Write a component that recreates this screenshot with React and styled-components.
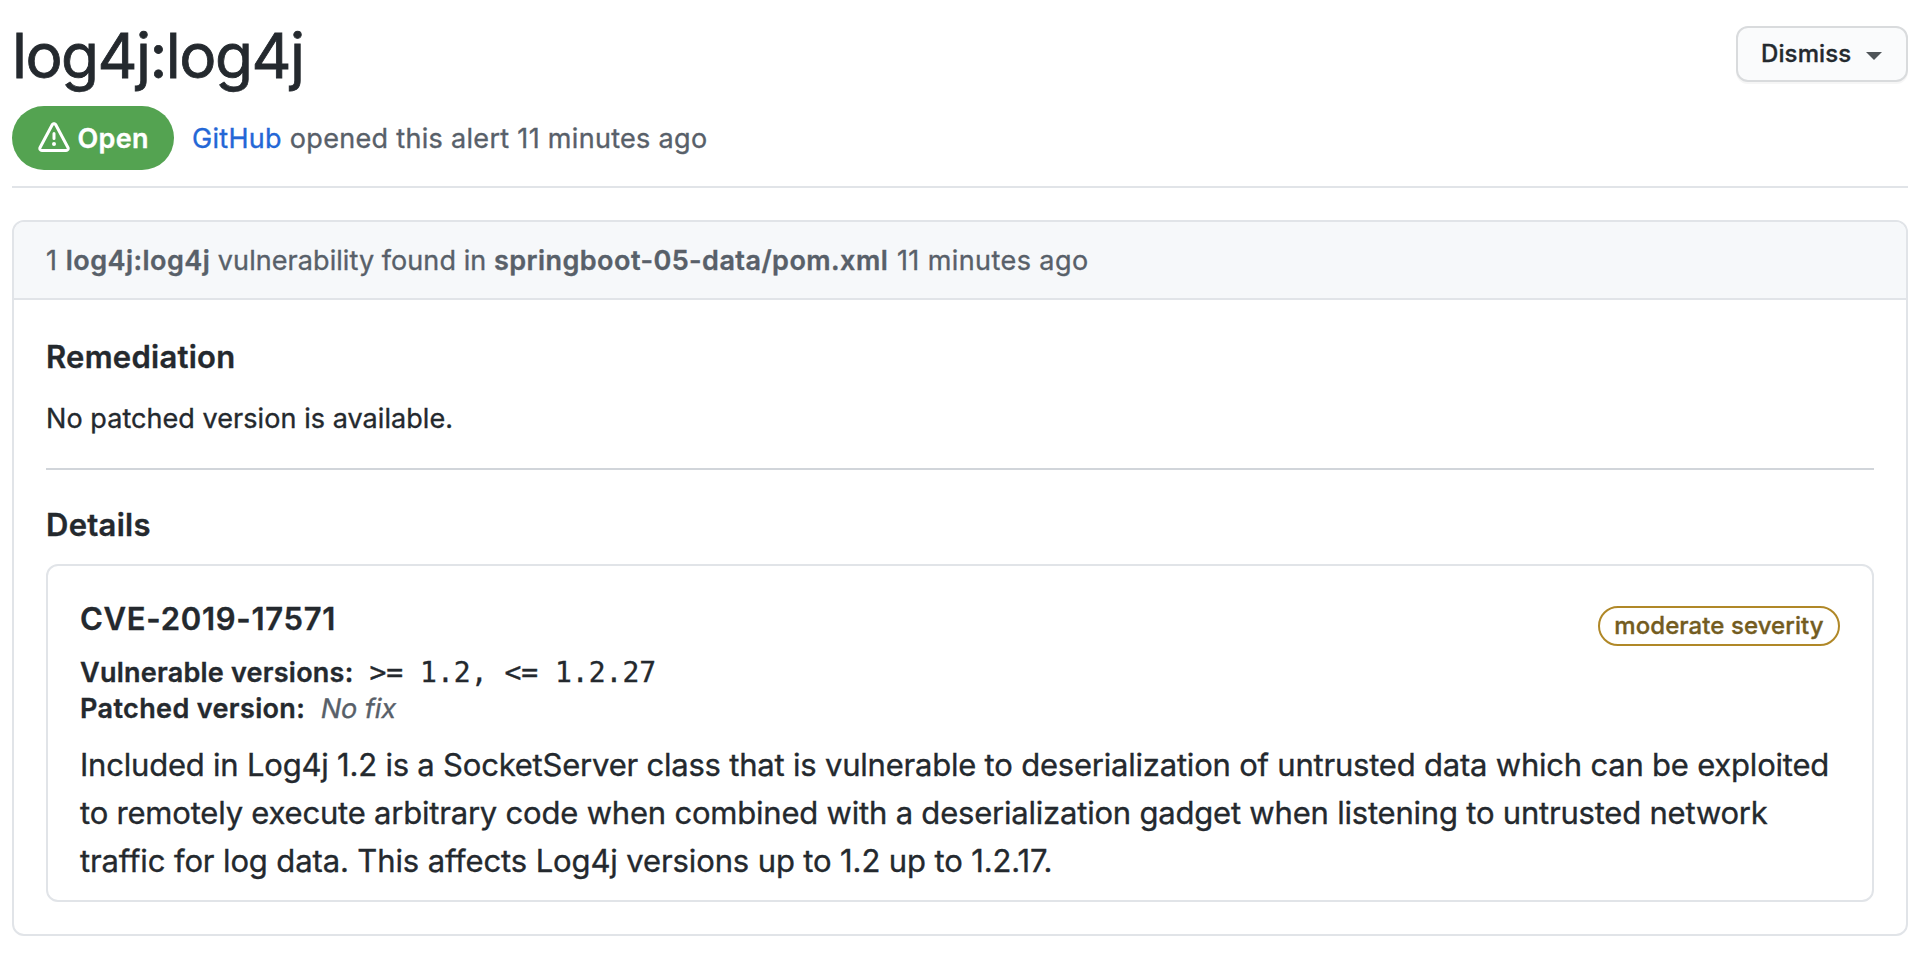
import React from "react";
import styled, { createGlobalStyle } from "styled-components";

const GlobalStyle = createGlobalStyle`
  *, *::before, *::after { box-sizing: border-box; }
  body {
    margin: 0;
    background: #fff;
    color: #24292e;
    font-family: Inter, "Liberation Sans", sans-serif;
    font-size: 27px;
    -webkit-text-stroke: 0.35px currentColor;
  }
`;

const Page = styled.main`
  padding: 20px 22px 0 12px;
`;

const PageHeader = styled.header`
  display: flex;
  flex-direction: column;
  border-bottom: 2px solid #e1e4e8;
  padding-bottom: 16px;
`;

const TitleRow = styled.div`
  display: flex;
  align-items: flex-start;
  justify-content: space-between;
  height: 72px;
  margin-bottom: 14px;
`;

const Title = styled.h1`
  margin: 0;
  font-size: 62px;
  font-weight: 400;
  line-height: 71px;
  letter-spacing: -1.55px;
  -webkit-text-stroke-width: 0.8px;
`;

const DismissButton = styled.button`
  display: flex;
  align-items: center;
  justify-content: space-between;
  width: 172px;
  height: 56px;
  margin-top: 6px;
  padding: 0 24px 0 23px;
  border: 2px solid #d9dbdd;
  border-radius: 12px;
  background: #fafbfc;
  box-shadow: 0 2px 0 rgba(27, 31, 35, 0.04);
  color: #24292e;
  font: 500 24px/40px Inter, "Liberation Sans", sans-serif;
  letter-spacing: 0.12px;
`;

const Caret = styled.span`
  border: 8px solid transparent;
  border-top-color: #4f5458;
  border-bottom: 0;
  margin-top: 3px;
`;

const StatusRow = styled.div`
  display: flex;
  align-items: center;
  height: 64px;
`;

const StatePill = styled.span`
  display: flex;
  align-items: center;
  gap: 7.5px;
  width: 162px;
  height: 64px;
  margin-right: 18px;
  padding-left: 26px;
  border-radius: 32px;
  background: #54a351;
  color: #fff;
  font-weight: 600;
  letter-spacing: 0.31px;
`;

const StatusText = styled.span`
  color: #586069;
  letter-spacing: 0.31px;
`;

const Link = styled.a`
  color: #2467d6;
`;

const Box = styled.section`
  margin-top: 32px;
  border: 2px solid #e1e4e8;
  border-radius: 12px;
`;

const BoxHeader = styled.div`
  height: 78px;
  padding: 1px 32px 0;
  border-bottom: 2px solid #e1e4e8;
  border-radius: 10px 10px 0 0;
  background: #f6f8fa;
  color: #586069;
  line-height: 76px;
  letter-spacing: 0.07px;

  strong {
    font-weight: 600;
    letter-spacing: 0.45px;
  }
`;

const Count = styled.span`
  margin-right: 1px;
`;

const Age = styled.span`
  margin-left: 1px;
  letter-spacing: 0.42px;
`;

const BoxBody = styled.div`
  padding: 33px 32px 32px;
`;

const SectionTitle = styled.h3`
  margin: 0;
  font-size: 31px;
  font-weight: 600;
  line-height: 48px;
  letter-spacing: ${(p) => p.$tracking || "0.26px"};
`;

const RemediationText = styled.p`
  margin: 17px 0 28px;
  line-height: 42px;
  letter-spacing: 0.06px;
`;

const Rule = styled.hr`
  height: 2px;
  margin: 0 0 31px;
  border: 0;
  background: #d1d5da;
`;

const Advisory = styled.article`
  margin-top: 15px;
  padding: 29px 32px 15px;
  border: 2px solid #e1e4e8;
  border-radius: 12px;
`;

const AdvisoryHead = styled.div`
  display: flex;
  align-items: flex-start;
  justify-content: space-between;
  margin-bottom: 9px;
`;

const SeverityLabel = styled.span`
  width: 242px;
  height: 40px;
  margin-top: 11px;
  border: 2px solid #b08828;
  border-radius: 20px;
  color: #735c21;
  font-size: 24px;
  font-weight: 500;
  line-height: 35px;
  letter-spacing: 0.08px;
  text-align: center;
`;

const Fact = styled.div`
  display: flex;
  align-items: baseline;
  gap: 16px;
  height: 36px;
  line-height: 36px;
`;

const FactName = styled.strong`
  font-weight: 600;
  letter-spacing: ${(p) => p.$tracking};
`;

const VersionRange = styled.code`
  font: 28px/36px "DejaVu Sans Mono", "Liberation Mono", monospace;
  white-space: pre;
`;

const NoFix = styled.em`
  display: inline-block;
  color: #586069;
  font-style: normal;
  transform: skewX(-10deg);
`;

const Description = styled.p`
  margin: 14px 0 0;
  font-size: 31px;
  line-height: 48px;
  white-space: nowrap;
`;

const TextLine = styled.span`
  display: block;
  letter-spacing: ${(p) => p.$tracking};
`;

const AlertIcon = () => (
  <svg width="32" height="32" viewBox="0 0 16 16" fill="#fff" aria-hidden="true">
    <path
      fillRule="evenodd"
      d="M8.22 1.754a.25.25 0 00-.44 0L1.698 13.132a.25.25 0 00.22.368h12.164a.25.25 0 00.22-.368L8.22 1.754zm-1.763-.707c.659-1.234 2.427-1.234 3.086 0l6.082 11.378A1.75 1.75 0 0114.082 15H1.918a1.75 1.75 0 01-1.543-2.575L6.457 1.047zM9 11a1 1 0 11-2 0 1 1 0 012 0zm-.25-5.25a.75.75 0 00-1.5 0v2.5a.75.75 0 001.5 0v-2.5z"
    />
  </svg>
);

export default function App() {
  return (
    <Page>
      <GlobalStyle />
      <PageHeader>
        <TitleRow>
          <Title>log4j:log4j</Title>
          <DismissButton>
            Dismiss
            <Caret />
          </DismissButton>
        </TitleRow>
        <StatusRow>
          <StatePill>
            <AlertIcon />
            Open
          </StatePill>
          <StatusText>
            <Link>GitHub</Link> opened this alert 11 minutes ago
          </StatusText>
        </StatusRow>
      </PageHeader>

      <Box>
        <BoxHeader>
          <Count>1</Count> <strong>log4j:log4j</strong> vulnerability found in{" "}
          <strong>springboot-05-data/pom.xml</strong> <Age>11 minutes ago</Age>
        </BoxHeader>
        <BoxBody>
          <SectionTitle>Remediation</SectionTitle>
          <RemediationText>No patched version is available.</RemediationText>
          <Rule />
          <SectionTitle>Details</SectionTitle>
          <Advisory>
            <AdvisoryHead>
              <SectionTitle $tracking="0.72px">CVE-2019-17571</SectionTitle>
              <SeverityLabel>moderate severity</SeverityLabel>
            </AdvisoryHead>
            <Fact>
              <FactName $tracking="0.24px">Vulnerable versions:</FactName>
              <VersionRange>&gt;= 1.2, &lt;= 1.2.27</VersionRange>
            </Fact>
            <Fact>
              <FactName $tracking="0.37px">Patched version:</FactName>
              <NoFix>No fix</NoFix>
            </Fact>
            <Description>
              <TextLine $tracking="-0.21px">
                Included in Log4j 1.2 is a SocketServer class that is vulnerable to deserialization of untrusted data which can be exploited{" "}
              </TextLine>
              <TextLine $tracking="-0.205px">
                to remotely execute arbitrary code when combined with a deserialization gadget when listening to untrusted network{" "}
              </TextLine>
              <TextLine $tracking="-0.12px">
                traffic for log data. This affects Log4j versions up to 1.2 up to 1.2.17.
              </TextLine>
            </Description>
          </Advisory>
        </BoxBody>
      </Box>
    </Page>
  );
}
